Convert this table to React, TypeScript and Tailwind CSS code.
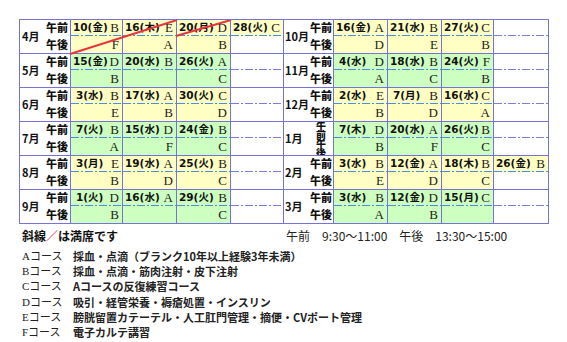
type Bg = "y" | "g" | "w";
type Cell = { d?: string; am?: string; pm?: string; bg: Bg; pmBg?: Bg };
type Row = { m: string; cells: Cell[] };

const leftRows: Row[] = [
  {
    m: "4月",
    cells: [
      { d: "10(金)", am: "B", pm: "F", bg: "y" },
      { d: "16(木)", am: "E", pm: "A", bg: "y" },
      { d: "20(月)", am: "D", pm: "B", bg: "y" },
      { d: "28(火)", am: "C", bg: "y", pmBg: "w" },
    ],
  },
  {
    m: "5月",
    cells: [
      { d: "15(金)", am: "D", pm: "B", bg: "g" },
      { d: "20(水)", am: "B", bg: "g" },
      { d: "26(火)", am: "A", pm: "C", bg: "g" },
      { bg: "w" },
    ],
  },
  {
    m: "6月",
    cells: [
      { d: "3(水)", am: "B", pm: "E", bg: "y" },
      { d: "17(水)", am: "A", pm: "B", bg: "y" },
      { d: "30(火)", am: "C", pm: "D", bg: "y" },
      { bg: "w" },
    ],
  },
  {
    m: "7月",
    cells: [
      { d: "7(火)", am: "B", pm: "A", bg: "g" },
      { d: "15(水)", am: "D", pm: "F", bg: "g" },
      { d: "24(金)", am: "B", pm: "C", bg: "g" },
      { bg: "w" },
    ],
  },
  {
    m: "8月",
    cells: [
      { d: "3(月)", am: "E", pm: "B", bg: "y" },
      { d: "19(水)", am: "A", pm: "D", bg: "y" },
      { d: "25(火)", am: "B", pm: "C", bg: "y" },
      { bg: "w" },
    ],
  },
  {
    m: "9月",
    cells: [
      { d: "1(火)", am: "D", pm: "B", bg: "g" },
      { d: "16(水)", am: "A", bg: "g" },
      { d: "29(火)", am: "B", pm: "C", bg: "g" },
      { bg: "w" },
    ],
  },
];

const rightRows: Row[] = [
  {
    m: "10月",
    cells: [
      { d: "16(金)", am: "A", pm: "D", bg: "y" },
      { d: "21(水)", am: "B", pm: "E", bg: "y" },
      { d: "27(火)", am: "C", pm: "B", bg: "y" },
      { bg: "w" },
    ],
  },
  {
    m: "11月",
    cells: [
      { d: "4(水)", am: "D", pm: "A", bg: "g" },
      { d: "18(水)", am: "B", pm: "C", bg: "g" },
      { d: "24(火)", am: "F", pm: "B", bg: "g" },
      { bg: "w" },
    ],
  },
  {
    m: "12月",
    cells: [
      { d: "2(水)", am: "E", pm: "B", bg: "y" },
      { d: "7(月)", am: "B", pm: "D", bg: "y" },
      { d: "16(水)", am: "C", pm: "A", bg: "y" },
      { bg: "w" },
    ],
  },
  {
    m: "1月",
    cells: [
      { d: "7(木)", am: "D", pm: "B", bg: "g" },
      { d: "20(水)", am: "A", pm: "F", bg: "g" },
      { d: "26(火)", am: "B", pm: "C", bg: "g" },
      { bg: "w" },
    ],
  },
  {
    m: "2月",
    cells: [
      { d: "3(水)", am: "B", pm: "E", bg: "y" },
      { d: "12(金)", am: "A", pm: "D", bg: "y" },
      { d: "18(木)", am: "B", pm: "C", bg: "y" },
      { d: "26(金)", am: "B", bg: "y", pmBg: "w" },
    ],
  },
  {
    m: "3月",
    cells: [
      { d: "3(水)", am: "B", pm: "A", bg: "g" },
      { d: "12(金)", am: "D", pm: "B", bg: "g" },
      { d: "15(月)", am: "C", bg: "g" },
      { bg: "w" },
    ],
  },
];

const leftW = ["w-[52px]", "w-[54px]", "w-[54px]", "w-[53px]"];
const rightW = ["w-[54px]", "w-[54px]", "w-[52px]", "w-[55px]"];

const bgClass: Record<Bg, string> = {
  y: "bg-[#ffffc4]",
  g: "bg-[#ccffc0]",
  w: "bg-white",
};

const courses = [
  ["Aコース", "採血・点滴（ブランク10年以上経験3年未満）"],
  ["Bコース", "採血・点滴・筋肉注射・皮下注射"],
  ["Cコース", "Aコースの反復練習コース"],
  ["Dコース", "吸引・経管栄養・褥瘡処置・インスリン"],
  ["Eコース", "膀胱留置カテーテル・人工肛門管理・摘便・CVポート管理"],
  ["Fコース", "電子カルテ講習"],
];

function DayCell({ c, w }: { c: Cell; w: string }) {
  const pmBg = c.pmBg ?? c.bg;
  const single = c.d ? /^\d\(/.test(c.d) : false;
  return (
    <div className={`${w} h-full flex flex-col border-r border-[#7474d6]`}>
      <div className={`h-[15px] flex items-center justify-between pr-[3px] ${single ? "pl-[5px]" : "pl-[2px]"} ${bgClass[c.bg]}`}>
        <span className="font-['DejaVu_Sans','Noto_Sans_CJK_JP',sans-serif] text-[10.5px] font-bold leading-none text-[#111]">{c.d}</span>
        <span className="font-['Liberation_Serif',serif] text-[13px] leading-none text-[#222]">{c.am}</span>
      </div>
      {c.bg === "w" ? (
        <div className="h-px bg-white bg-[repeating-linear-gradient(90deg,#7d7de0_0_8px,transparent_8px_10px,#7d7de0_10px_12px,transparent_12px_14px)]" />
      ) : (
        <div className={`h-px ${bgClass[c.bg]} bg-[repeating-linear-gradient(90deg,#4c8fe0_0_8px,transparent_8px_10px,#4c8fe0_10px_12px,transparent_12px_14px)]`} />
      )}
      <div className={`flex-1 flex items-center justify-end pr-[3px] ${bgClass[pmBg]}`}>
        <span className="font-['Liberation_Serif',serif] text-[13px] leading-none text-[#222]">{c.pm}</span>
      </div>
    </div>
  );
}

function Label({ stacked }: { stacked?: boolean }) {
  if (stacked) {
    // the reference squeezes 午前/午後 into one narrow column here
    return (
      <div className="h-full overflow-hidden flex flex-col items-center justify-center text-[10px] font-black leading-[9px]">
        <span>午</span>
        <span>前</span>
        <span>午</span>
        <span>後</span>
      </div>
    );
  }
  return (
    <div className="h-full flex flex-col text-[11px] font-black leading-none">
      <div className="h-[15px] flex items-center justify-center">午前</div>
      <div className="h-px" />
      <div className="flex-1 flex items-center justify-center">午後</div>
    </div>
  );
}

function Half({ r, widths, left }: { r: Row; widths: string[]; left?: boolean }) {
  return (
    <div className="flex h-full">
      <div className={`${left ? "w-[25px] border-l border-[#7474d6] pl-[2px]" : "w-[25px] pl-[1px]"} flex items-center text-[11px] font-bold`}>
        {r.m}
      </div>
      <div className={`${left ? "w-[27px]" : "w-[25px]"} border-r border-[#7474d6]`}>
        <Label stacked={r.m === "1月"} />
      </div>
      {r.cells.map((c, i) => (
        <DayCell key={i} c={c} w={widths[i]} />
      ))}
    </div>
  );
}

export default function App() {
  return (
    <div className="w-[567px] h-[342px] bg-white overflow-hidden pt-[19px] pl-[19px] font-['Noto_Sans_CJK_JP',sans-serif] text-[#111]">
      <div className="relative w-[530px] border-t border-[#7474d6]">
        {leftRows.map((r, i) => (
          <div key={r.m} className="flex h-[34px] border-b border-[#7474d6]">
            <Half r={r} widths={leftW} left />
            <Half r={rightRows[i]} widths={rightW} />
          </div>
        ))}
        <svg className="absolute left-0 top-0 pointer-events-none" width="240" height="40" viewBox="0 0 240 40">
          <line x1="51" y1="34" x2="158" y2="0" stroke="#e8333c" strokeWidth="2" />
          <line x1="157" y1="16" x2="212" y2="0" stroke="#e8333c" strokeWidth="2" />
        </svg>
      </div>

      <div className="flex mt-[4px] leading-[15px]">
        <div className="w-[264px] pl-[3px] text-[12px] font-bold">
          斜線<span className="text-[#e8333c] font-normal">／</span>は満席です
        </div>
        <div className="pl-[3px] text-[12px] text-[#222] whitespace-pre">
          午前　9:30～11:00　午後　13:30～15:00
        </div>
      </div>

      <div className="mt-[6px] pl-[3px]">
        {courses.map(([k, v]) => (
          <div key={k} className="flex h-[15.2px] items-center text-[11px] leading-none">
            <span className="w-[51px] font-['Liberation_Serif','Noto_Sans_CJK_JP',serif] text-[#222]">{k}</span>
            <span className="font-semibold text-[#222]">{v}</span>
          </div>
        ))}
      </div>
    </div>
  );
}
